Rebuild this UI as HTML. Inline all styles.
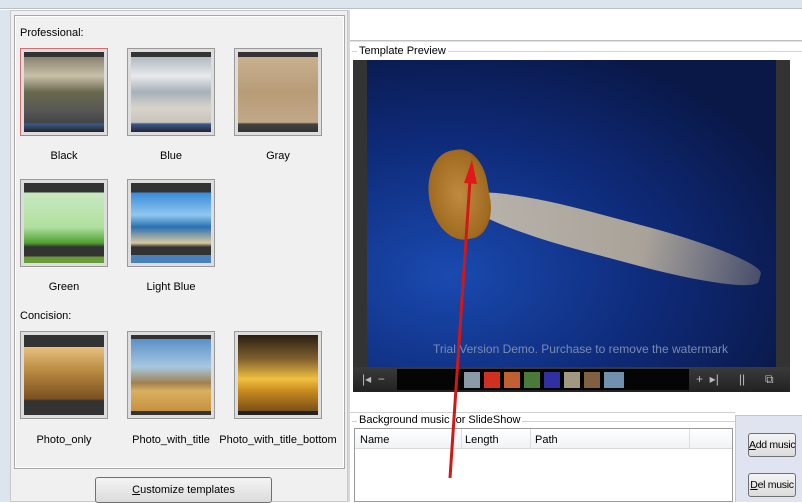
<!DOCTYPE html>
<html><head><meta charset="utf-8"><style>
*{box-sizing:border-box;margin:0;padding:0}
body{width:802px;height:502px;overflow:hidden;background:#fff;font-family:"Liberation Sans",sans-serif;font-size:11px;color:#000;position:relative}
.a{position:absolute;white-space:nowrap}
.thumb{position:absolute;width:88px;height:88px;border:1px solid #999;background:#ddd;padding:3px}
.thumb div{width:100%;height:100%}
.lbl{position:absolute;width:120px;text-align:center;font-size:11px;white-space:nowrap}
.btn{position:absolute;border:1px solid #707070;border-radius:3px;background:linear-gradient(#f4f4f4,#dcdcdc);text-align:center;font-size:11px;white-space:nowrap;overflow:hidden}
</style></head><body>
<div class="a" style="left:0;top:0;width:802px;height:9px;background:#dce4ee;border-bottom:1px solid #b8c0cc"></div>
<div class="a" style="left:0;top:10px;width:10px;height:492px;background:#dce4ee"></div>
<div class="a" style="left:10px;top:10px;width:338px;height:492px;background:#f0f0f0;border:1px solid #c8c8c8"></div>
<div class="a" style="left:14px;top:15px;width:331px;height:454px;border:1px solid #a8a8a8;box-shadow:inset 0 0 0 1px #fff;background:#f0f0f0"></div>
<div class="a" style="left:348px;top:10px;width:2px;height:492px;background:#d8d8d8"></div>
<div class="a" style="left:20px;top:27px">Professional:</div>
<div class="thumb" style="left:20px;top:48px;border-color:#d07070"><div style="background:linear-gradient(#333 0 6%,#8a8070 6%,#c8c0a8 30%,#6a6a50 50%,#555 75%,#444 88%,#3a5a8a 90%,#222)"></div></div>
<div class="thumb" style="left:127px;top:48px"><div style="background:linear-gradient(#333 0 6%,#b0b8c0 6%,#e8eaec 30%,#a8b0b8 50%,#d8d4cc 70%,#c8c4bc 88%,#3a5a8a 90%,#223)"></div></div>
<div class="thumb" style="left:234px;top:48px"><div style="background:linear-gradient(#333 0 6%,#c8b090 6%,#b89c78 50%,#c0a888 88%,#444 90%,#333)"></div></div>
<div class="lbl" style="left:4px;top:150px">Black</div>
<div class="lbl" style="left:111px;top:150px">Blue</div>
<div class="lbl" style="left:218px;top:150px">Gray</div>
<div class="thumb" style="left:20px;top:179px"><div style="background:linear-gradient(#333 0 12%,#c8e8c0 12%,#b0e0a0 55%,#50a030 75%,#333 80%,#333 92%,#6a9a3a 92%)"></div></div>
<div class="thumb" style="left:127px;top:179px"><div style="background:linear-gradient(#333 0 12%,#3a8ad8 12%,#90c8f0 40%,#2a70b0 55%,#d8c8a0 75%,#333 80%,#333 90%,#4a80b8 90%)"></div></div>
<div class="lbl" style="left:4px;top:281px">Green</div>
<div class="lbl" style="left:111px;top:281px">Light Blue</div>
<div class="a" style="left:20px;top:310px">Concision:</div>
<div class="thumb" style="left:20px;top:331px"><div style="background:linear-gradient(#333 0 15%,#e8c080 15%,#b88a40 45%,#7a5020 80%,#333 82%)"></div></div>
<div class="thumb" style="left:127px;top:331px"><div style="background:linear-gradient(#333 0 5%,#5a90c8 5%,#a8c8e0 40%,#a08050 60%,#d8b060 70%,#c89040 95%,#333 95%)"></div></div>
<div class="thumb" style="left:234px;top:331px"><div style="background:linear-gradient(#2a2010,#806030 30%,#f0c040 55%,#c88a20 70%,#7a5018 95%,#222 95%)"></div></div>
<div class="lbl" style="left:4px;top:434px">Photo_only</div>
<div class="lbl" style="left:111px;top:434px">Photo_with_title</div>
<div class="lbl" style="left:213px;top:434px;width:130px">Photo_with_title_bottom</div>
<div class="btn" style="left:95px;top:477px;width:177px;height:26px;line-height:24px"><u>C</u>ustomize templates</div>
<div class="a" style="left:350px;top:40px;width:452px;height:2px;border-top:1px solid #c0c0c0;border-bottom:1px solid #e0e0e0"></div>
<div class="a" style="left:352px;top:51px;width:450px;height:1px;background:#d4d4d4"></div>
<div class="a" style="left:357px;top:45px;background:#fff;padding:0 2px">Template Preview</div>
<div class="a" style="left:353px;top:60px;width:437px;height:307px;background:#333"></div>
<div class="a" style="left:367px;top:60px;width:409px;height:307px;background:radial-gradient(ellipse at 20% 70%,#1a4ab0,#0e2a78 45%,#0a1848 80%)"></div>
<div class="a" style="left:470px;top:180px;width:300px;height:40px;background:linear-gradient(90deg,#e0d0b0,#d0c0a0 60%,rgba(200,180,140,.4));border-radius:40%;transform:rotate(15deg);transform-origin:left center;opacity:.8"></div>
<div class="a" style="left:429px;top:150px;width:60px;height:90px;border-radius:50% 40% 40% 50%;background:radial-gradient(#c08a40,#a06a20 70%,#704010);transform:rotate(-10deg)"></div>
<div class="a" style="left:433px;top:342px;color:#7a8cb0;font-size:12px">Trial Version Demo. Purchase to remove the watermark</div>
<div class="a" style="left:353px;top:367px;width:437px;height:25px;background:linear-gradient(#3a3a3a,#222)"></div>
<div class="a" style="left:397px;top:369px;width:292px;height:21px;background:#050505"></div>
<div class="a" style="left:362px;top:372px;color:#bbb;font-size:12px">|◂&nbsp;&nbsp;−</div>
<div class="a" style="left:696px;top:372px;color:#bbb;font-size:12px">+&nbsp;&nbsp;▸|&nbsp;&nbsp;&nbsp;&nbsp;&nbsp;&nbsp;||&nbsp;&nbsp;&nbsp;&nbsp;&nbsp;&nbsp;⧉</div>
<div class="a" style="left:464px;top:372px;width:160px;height:16px;background:linear-gradient(90deg,#8a9aa8 0 10%,#000 10% 12.5%,#d03020 12.5% 22.5%,#000 22.5% 25%,#c06030 25% 35%,#000 35% 37.5%,#4a7a3a 37.5% 47.5%,#000 47.5% 50%,#3030a0 50% 60%,#000 60% 62.5%,#a09880 62.5% 72.5%,#000 72.5% 75%,#806040 75% 85%,#000 85% 87.5%,#7090b0 87.5%)"></div>
<div class="a" style="left:350px;top:412px;width:385px;height:1px;background:#d0d0d0"></div>
<div class="a" style="left:352px;top:421px;width:383px;height:1px;background:#d0d0d0"></div>
<div class="a" style="left:357px;top:414px;background:#fff;padding:0 2px">Background music for SlideShow</div>
<div class="a" style="left:354px;top:428px;width:379px;height:74px;border:1px solid #999;background:#fff"></div>
<div class="a" style="left:355px;top:429px;width:377px;height:20px;background:linear-gradient(#fff,#f0f2f4);border-bottom:1px solid #d8d8d8"></div>
<div class="a" style="left:360px;top:434px">Name</div>
<div class="a" style="left:461px;top:429px;width:1px;height:20px;background:#ddd"></div>
<div class="a" style="left:465px;top:434px">Length</div>
<div class="a" style="left:530px;top:429px;width:1px;height:20px;background:#ddd"></div>
<div class="a" style="left:535px;top:434px">Path</div>
<div class="a" style="left:689px;top:429px;width:1px;height:20px;background:#ddd"></div>
<div class="a" style="left:735px;top:415px;width:67px;height:87px;background:#dfe4f0;border-left:1px solid #c0c6d4;border-top:1px solid #c0c6d4"></div>
<div class="btn" style="left:748px;top:433px;width:48px;height:24px;line-height:22px;font-size:10.5px;letter-spacing:-0.3px"><u>A</u>dd music</div>
<div class="btn" style="left:748px;top:473px;width:48px;height:24px;line-height:22px;font-size:10.5px;letter-spacing:-0.3px"><u>D</u>el music</div>
<svg class="a" style="left:0;top:0" width="802" height="502"><line x1="450" y1="478" x2="470" y2="180" stroke="#d01818" stroke-width="3"/><polygon points="472,160 464,183 477,184" fill="#e01818"/></svg>
</body></html>
